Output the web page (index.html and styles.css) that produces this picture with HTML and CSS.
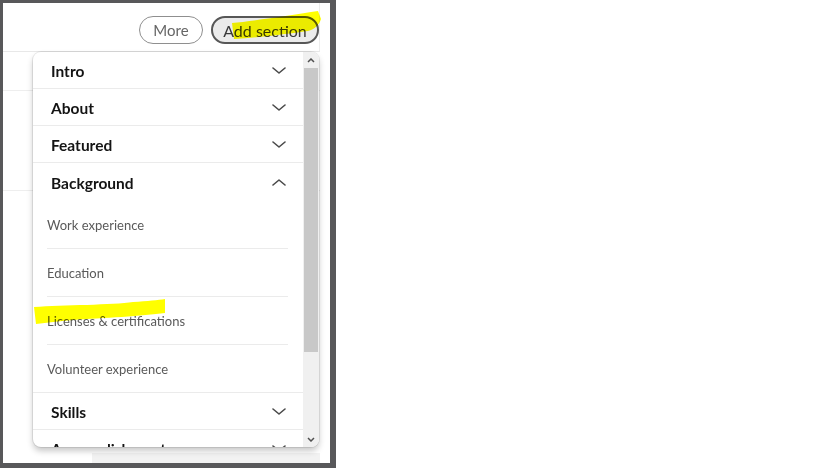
FILE: index.html
```html
<!DOCTYPE html>
<html lang="en">
<head>
  <meta charset="UTF-8">
  <meta name="viewport" content="width=device-width, initial-scale=1.0">
  <title>Add profile section</title>
  <link rel="stylesheet" href="styles.css">
</head>
<body>
  <div class="frame">
    <div class="topbar">
      <button class="pill">More</button>
      <button class="pill pill-active">Add section</button>
    </div>
    <div class="page">
      <div class="page-row short"></div>
      <div class="page-row tall"></div>
      <div class="page-rest"></div>
      <div class="page-band"></div>
    </div>

    <div class="menu">
      <div class="menu-list">
        <div class="group">
          <span>Intro</span>
          <svg class="chev" viewBox="0 0 14 7"><path d="M1 1 L7 6 L13 1"/></svg>
        </div>
        <div class="group">
          <span>About</span>
          <svg class="chev" viewBox="0 0 14 7"><path d="M1 1 L7 6 L13 1"/></svg>
        </div>
        <div class="group">
          <span>Featured</span>
          <svg class="chev" viewBox="0 0 14 7"><path d="M1 1 L7 6 L13 1"/></svg>
        </div>
        <div class="group open">
          <span>Background</span>
          <svg class="chev" viewBox="0 0 14 7"><path d="M1 6 L7 1 L13 6"/></svg>
        </div>
        <ul class="sublist">
          <li>Work experience</li>
          <li>Education</li>
          <li>Licenses &amp; certifications</li>
          <li>Volunteer experience</li>
        </ul>
        <div class="group">
          <span>Skills</span>
          <svg class="chev" viewBox="0 0 14 7"><path d="M1 1 L7 6 L13 1"/></svg>
        </div>
        <div class="group">
          <span>Accomplishments</span>
          <svg class="chev" viewBox="0 0 14 7"><path d="M1 1 L7 6 L13 1"/></svg>
        </div>
      </div>
      <div class="scrollbar">
        <div class="sb-btn">
          <svg viewBox="0 0 8 5"><path d="M1 4 L4 1 L7 4"/></svg>
        </div>
        <div class="sb-thumb"></div>
        <div class="sb-track"></div>
        <div class="sb-btn">
          <svg viewBox="0 0 8 5"><path d="M1 1 L4 4 L7 1"/></svg>
        </div>
      </div>
    </div>

    <!-- marker strokes drawn over the screenshot -->
    <svg class="marker" viewBox="0 0 330 460">
      <path d="M229 20 C250 18 290 12 315 8 L318 16 C316 22 312 26 305 28 C285 31 260 34 231 36 Z"/>
      <path d="M31 304 C60 302 110 302 130 299 C145 298 155 297 162 296 L162 310 C140 313 100 315 70 317 C55 318 45 320 33 321 Z"/>
    </svg>
  </div>
</body>
</html>
```

FILE: styles.css
```css
* {
  box-sizing: border-box;
  margin: 0;
  padding: 0;
}
body {
  background: #ffffff;
  font-family: Lato, 'Noto Sans', sans-serif;
}
.frame {
  position: relative;
  width: 336px;
  height: 468px;
  border: 3px solid #58585a;
  border-right-width: 6px;
  border-bottom-width: 5px;
  background: #ffffff;
  overflow: hidden;
}
.topbar {
  height: 49px;
  display: flex;
  justify-content: flex-end;
  align-items: flex-start;
  gap: 8px;
  padding: 13px 11px 0 0;
  border-bottom: 1px solid #e8e8e8;
  margin-right: 10px;
  border-right: 1px solid #ececec;
}
.pill {
  height: 28px;
  width: 64px;
  padding: 0;
  border-radius: 14px;
  border: 1px solid #8f8f8f;
  background: #ffffff;
  color: #666666;
  font-family: inherit;
  font-size: 15px;
  white-space: nowrap;
}
.pill-active {
  width: 108px;
  border: 2px solid #575757;
  background: #ebebeb;
  color: #3a3a3a;
  font-size: 16px;
  margin-right: -11px;
}
.page {
  display: flex;
  flex-direction: column;
  height: 411px;
}
.page-row {
  border-bottom: 1px solid #eeeeee;
  margin-right: 10px;
}
.page-row.short {
  height: 39px;
}
.page-row.tall {
  height: 100px;
}
.page-rest {
  flex: 1;
}
.page-band {
  height: 10px;
  margin-left: 89px;
  margin-right: 10px;
  background: #f2f2f2;
}
.menu {
  position: absolute;
  left: 30px;
  top: 49px;
  width: 286px;
  height: 395px;
  display: flex;
  background: #ffffff;
  border-radius: 8px;
  overflow: hidden;
  box-shadow: 0 0 0 1px rgba(0, 0, 0, 0.08), 0 4px 6px rgba(0, 0, 0, 0.22);
}
.menu-list {
  flex: 1;
  overflow: hidden;
}
.group {
  height: 37px;
  display: flex;
  align-items: center;
  justify-content: space-between;
  padding: 2px 17px 0 18px;
  border-bottom: 1px solid #ebebeb;
  font-size: 15.5px;
  font-weight: 700;
  color: #141414;
}
.group.open {
  height: 38px;
  border-bottom: none;
}
.chev {
  width: 14px;
  height: 7px;
  margin-top: -2px;
  fill: none;
  stroke: #4a4a4a;
  stroke-width: 1.6;
  stroke-linecap: round;
  stroke-linejoin: round;
}
.sublist {
  list-style: none;
  border-bottom: 1px solid #ebebeb;
}
.sublist li {
  height: 48px;
  display: flex;
  align-items: center;
  margin: 0 15px 0 14px;
  border-bottom: 1px solid #ebebeb;
  font-size: 13px;
  color: #5a5a5a;
}
.sublist li:last-child {
  border-bottom: none;
  height: 47px;
}
.scrollbar {
  width: 16px;
  display: flex;
  flex-direction: column;
  background: #f0f0f0;
}
.sb-btn {
  height: 16px;
  display: flex;
  align-items: center;
  justify-content: center;
}
.sb-btn svg {
  width: 8px;
  height: 5px;
  fill: none;
  stroke: #505050;
  stroke-width: 1.5;
}
.sb-thumb {
  height: 284px;
  margin: 0 1px;
  background: #c8c8c8;
}
.sb-track {
  flex: 1;
}
.marker {
  position: absolute;
  left: 0;
  top: 0;
  width: 330px;
  height: 460px;
  fill: #ffff00;
  mix-blend-mode: multiply;
}
```
